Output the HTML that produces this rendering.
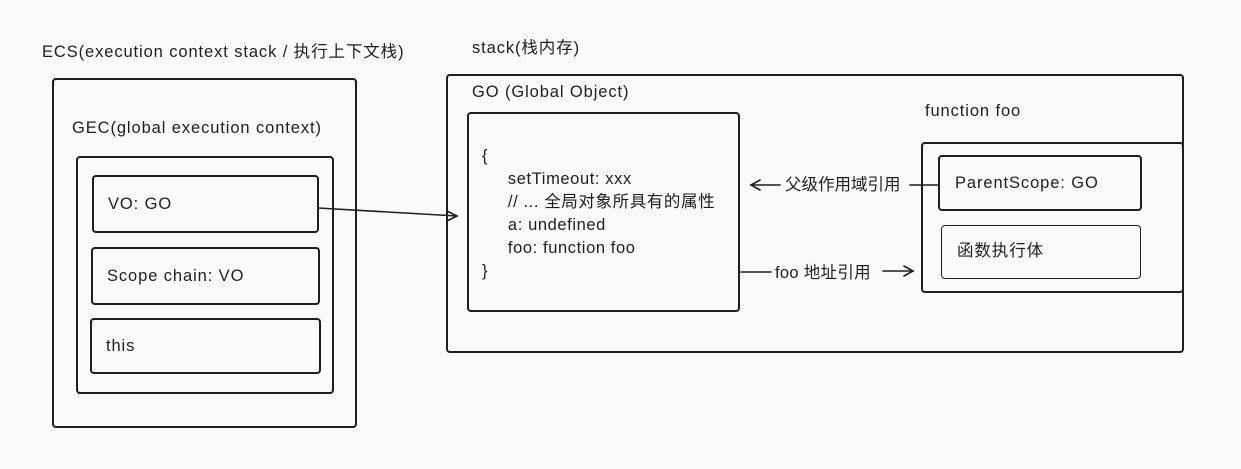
<!DOCTYPE html>
<html><head><meta charset="utf-8"><style>
html,body{margin:0;padding:0;}
body{width:1241px;height:469px;background:#f9fafb;position:relative;overflow:hidden;font-family:"Liberation Sans","Noto Sans CJK SC",sans-serif;color:#1e1e1e;}
.b{position:absolute;border:2px solid #1e1e1e;border-radius:4px;box-sizing:border-box;}
.t{position:absolute;font-size:16.5px;white-space:nowrap;line-height:20px;letter-spacing:0.9px;}
</style></head><body>
<div class="t" style="left:42px;top:42px;">ECS(execution context stack / 执行上下文栈)</div>
<div class="t" style="left:472px;top:38px;">stack(栈内存)</div>

<div class="b" style="left:52px;top:78px;width:305px;height:350px;"></div>
<div class="t" style="left:72px;top:118px;">GEC(global execution context)</div>
<div class="b" style="left:76px;top:156px;width:258px;height:238px;"></div>
<div class="b" style="left:92px;top:175px;width:227px;height:58px;"></div>
<div class="t" style="left:108px;top:194px;">VO: GO</div>
<div class="b" style="left:91px;top:247px;width:229px;height:58px;"></div>
<div class="t" style="left:107px;top:266px;">Scope chain: VO</div>
<div class="b" style="left:90px;top:318px;width:231px;height:56px;"></div>
<div class="t" style="left:106px;top:336px;">this</div>

<div class="b" style="left:446px;top:74px;width:738px;height:279px;"></div>
<div class="t" style="left:472px;top:82px;">GO (Global Object)</div>
<div class="b" style="left:467px;top:112px;width:273px;height:200px;"></div>
<div class="t" style="left:482px;top:145px;line-height:23px;letter-spacing:0.6px;">{<br>&nbsp;&nbsp;&nbsp;&nbsp;&nbsp;setTimeout: xxx<br>&nbsp;&nbsp;&nbsp;&nbsp;&nbsp;// ... 全局对象所具有的属性<br>&nbsp;&nbsp;&nbsp;&nbsp;&nbsp;a: undefined<br>&nbsp;&nbsp;&nbsp;&nbsp;&nbsp;foo: function foo<br>}</div>

<div class="t" style="left:925px;top:101px;">function foo</div>
<div class="b" style="left:921px;top:142px;width:263px;height:151px;"></div>
<div class="b" style="left:938px;top:155px;width:204px;height:56px;"></div>
<div class="t" style="left:955px;top:173px;">ParentScope: GO</div>
<div class="b" style="left:941px;top:225px;width:200px;height:54px;border-width:1.5px;"></div>
<div class="t" style="left:957px;top:241px;">函数执行体</div>

<div class="t" style="left:785px;top:175px;letter-spacing:0;">父级作用域引用</div>
<div class="t" style="left:775px;top:263px;letter-spacing:0.3px;">foo 地址引用</div>

<svg width="1241" height="469" style="position:absolute;left:0;top:0" fill="none" stroke="#1e1e1e" stroke-width="1.6" stroke-linecap="round">
<path d="M318 208 L457 216"/><path d="M447 211 L457 216 L447 221"/>
<path d="M938 185 L910 185"/>
<path d="M780 185 L751 185"/><path d="M760 180 L751 185 L760 190"/>
<path d="M741 272 L771 272"/>
<path d="M883 271 L913 271"/><path d="M904 266 L913 271 L904 276"/>
</svg>
</body></html>
